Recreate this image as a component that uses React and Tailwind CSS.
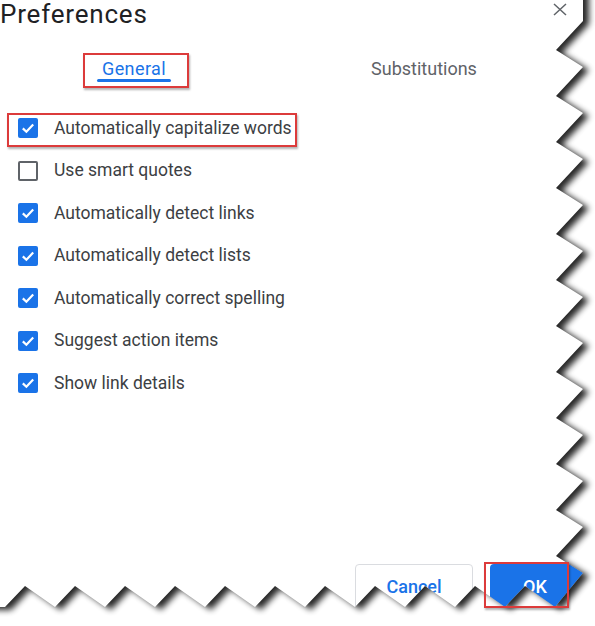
import React from 'react';

const options = [
  { label: 'Automatically capitalize words', checked: true },
  { label: 'Use smart quotes', checked: false },
  { label: 'Automatically detect links', checked: true },
  { label: 'Automatically detect lists', checked: true },
  { label: 'Automatically correct spelling', checked: true },
  { label: 'Suggest action items', checked: true },
  { label: 'Show link details', checked: true },
];

// torn paper edge along the right and bottom of the capture
const paperPath = () => {
  const pts = [[-20, -20], [583, -20], [583, 21]];
  for (let k = 0; k < 12; k++) {
    const y = 50 + 46 * k;
    pts.push([556, y]);
    pts.push([583, y + 17]);
  }
  for (let j = 10; j >= 0; j--) {
    pts.push([25 + 50 * j + 30, 607]);
    pts.push([25 + 50 * j, 586]);
  }
  pts.push([5, 607]);
  pts.push([-20, 607]);
  return 'M' + pts.map((p) => p.join(' ')).join(' L') + ' Z';
};

const TornEdge = () => {
  const paper = paperPath();
  const outside = 'M-40 -40 H640 V670 H-40 Z ' + paper;
  return (
    <svg className="absolute inset-0 pointer-events-none" width="595" height="626" viewBox="0 0 595 626">
      <defs>
        <filter id="blur" x="-10%" y="-10%" width="120%" height="120%">
          <feGaussianBlur stdDeviation="3.2" />
        </filter>
        <clipPath id="beyond">
          <path d={outside} clipRule="evenodd" />
        </clipPath>
      </defs>
      <path d={outside} fill="#fff" fillRule="evenodd" />
      <g clipPath="url(#beyond)">
        <path d={paper} transform="translate(6 3)" fill="#000" opacity="0.85" filter="url(#blur)" />
      </g>
    </svg>
  );
};

const Checkbox = ({ checked }) =>
  checked ? (
    <span className="flex w-[20px] h-[20px] shrink-0 items-center justify-center rounded-[2px] bg-[#1a73e8]">
      <svg width="20" height="20" viewBox="0 0 20 20">
        <path d="M4.8 10.4 L8.4 13.8 L15.2 6.6" fill="none" stroke="#fff" strokeWidth="2.2" />
      </svg>
    </span>
  ) : (
    <span className="block w-[20px] h-[20px] shrink-0 rounded-[2px] border-2 border-[#5f6368]" />
  );

export default function App() {
  return (
    <div className="relative w-[595px] h-[626px] overflow-hidden bg-white font-['Roboto',sans-serif]">
      <div className="flex items-start justify-between">
        <h1 className="text-[26px] leading-[28px] tracking-[0.8px] text-[#202124]">Preferences</h1>
        <button className="mr-[28px] mt-[3px]">
          <svg width="14" height="13" viewBox="0 0 14 13">
            <path d="M1 1 L13 12 M13 1 L1 12" stroke="#5f6368" strokeWidth="1.5" fill="none" />
          </svg>
        </button>
      </div>

      <div className="flex mt-[29px] h-[26px]">
        <div className="w-[268px] flex justify-center">
          <div className="relative flex flex-col items-stretch">
            <span className="px-[5px] text-[18px] leading-[24px] tracking-[0.4px] text-[#1a73e8]">General</span>
            <span className="block mt-[-2px] h-[3px] rounded-full bg-[#1a73e8]" />
            <span className="absolute left-[-14px] top-[-4px] w-[106px] h-[35px] border-2 border-[#dc3b3b] shadow-[1px_2px_2px_rgba(0,0,0,0.3)]" />
          </div>
        </div>
        <div className="w-[312px] flex justify-center">
          <span className="text-[18px] leading-[24px] text-[#5f6368]">Substitutions</span>
        </div>
      </div>

      <ul className="mt-[24px]">
        {options.map((o, i) => (
          <li key={o.label} className="relative flex items-center h-[42.5px] pl-[18px] gap-[16px]">
            <Checkbox checked={o.checked} />
            <span className="text-[17.5px] leading-none text-[#3c4043]">{o.label}</span>
            {i === 0 && (
              <span className="absolute left-[7px] top-[6px] w-[290px] h-[34px] border-2 border-[#dc3b3b] shadow-[1px_2px_2px_rgba(0,0,0,0.3)]" />
            )}
          </li>
        ))}
      </ul>

      <div className="flex mt-[159px] pl-[355px] gap-[17px]">
        <button className="w-[118px] h-[46px] rounded-[4px] border border-[#dadce0] bg-white text-[18px] font-medium text-[#1a73e8]">
          Cancel
        </button>
        <button className="w-[94px] h-[46px] rounded-[4px] bg-[#1a73e8] text-[18px] font-medium text-white pr-[4px]">
          OK
        </button>
      </div>

      <TornEdge />

      <span className="absolute left-[484px] top-[562px] w-[85px] h-[46px] border-2 border-[#dc3b3b] shadow-[1px_2px_2px_rgba(0,0,0,0.3)]" />
    </div>
  );
}
